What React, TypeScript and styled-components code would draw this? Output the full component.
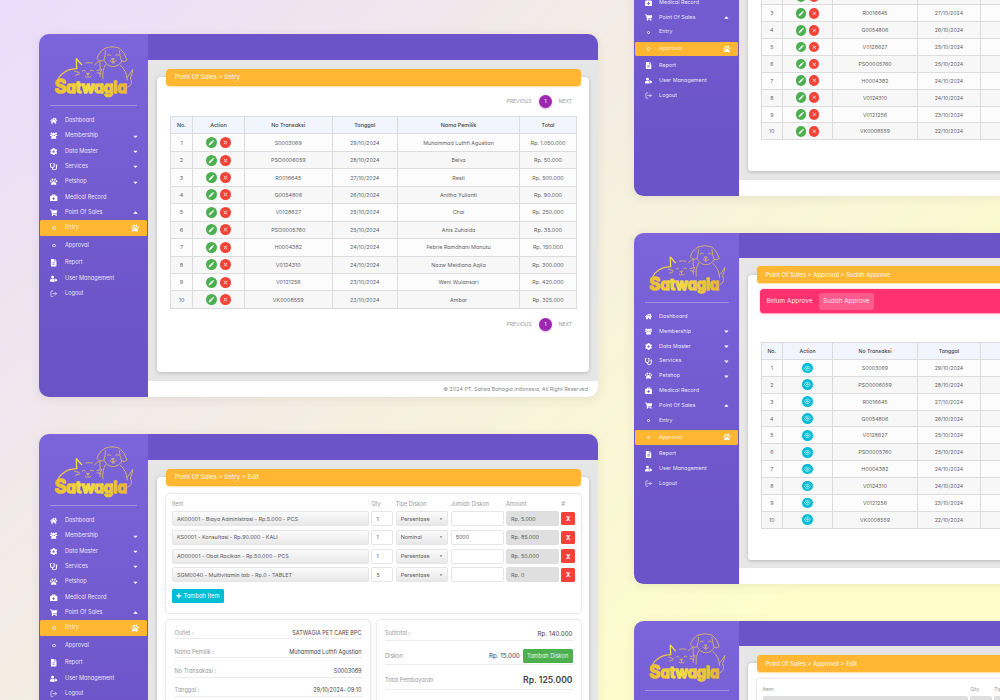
import React from 'react';
import styled, { createGlobalStyle, css } from 'styled-components';
import {
  FaHome, FaCog, FaStethoscope, FaPaw, FaBriefcaseMedical, FaShoppingCart,
  FaFileAlt, FaUserTag, FaPlus, FaCaretDown, FaCaretUp,
} from 'react-icons/fa';
import { MdEdit, MdClose } from 'react-icons/md';
import { FiLogOut, FiEye } from 'react-icons/fi';

const GlobalStyle = createGlobalStyle`
  *, *::before, *::after { box-sizing: border-box; }
  html, body { margin: 0; padding: 0; overflow: hidden; }
  body {
    font-family: Inter, "Liberation Sans", sans-serif;
    font-feature-settings: "cv11";
    color: #666;
  }
`;

const Board = styled.main`
  width: 1000px;
  height: 700px;
  overflow: hidden;
  display: grid;
  grid-template-columns: 559px 540px;
  column-gap: 36px;
  padding-left: 39px;
  background: linear-gradient(135deg, #ebdcfc 0%, #fffeca 82%);
`;

const Column = styled.div<{ $top: number; $gap: number }>`
  display: flex;
  flex-direction: column;
  align-items: flex-start;
  gap: ${(p) => p.$gap}px;
  margin-top: ${(p) => p.$top}px;
`;

const Window = styled.section<{ $zoom?: number }>`
  flex: none;
  display: flex;
  width: 559px;
  height: 363px;
  zoom: ${(p) => p.$zoom ?? 1};
  border-radius: 10px;
  overflow: hidden;
  background: #e6e6e6;
  box-shadow: 0 2px 10px rgba(90, 80, 60, 0.1);
`;

const Sidebar = styled.aside`
  flex: none;
  width: 109px;
  padding: 6px 1px 0;
  background: linear-gradient(180deg, #7c64db 0%, #6b54c7 85%);
  color: #fff;
`;

const LogoSvg = styled.svg`
  display: block;
  width: 100px;
  height: 65px;
  margin-left: 5px;
`;

const Divider = styled.hr`
  margin: 0 10px 7px;
  border: 0;
  height: 1px;
  background: rgba(255, 255, 255, 0.3);
`;

const NavItem = styled.div<{ $active?: boolean; $sub?: boolean }>`
  display: flex;
  align-items: center;
  height: 15.35px;
  margin-bottom: ${(p) => (p.$sub ? 2.1 : 0)}px;
  padding: 0 8px 0 9px;
  border-radius: 1.5px;
  font-size: 5.6px;
  line-height: 1;
  color: ${(p) => (p.$active ? '#fff0cf' : 'rgba(255,255,255,.88)')};
  background: ${(p) => (p.$active ? '#ffb733' : 'transparent')};
`;

const NavIcon = styled.span`
  display: flex;
  justify-content: center;
  width: 10px;
  margin-right: 6px;
  font-size: 7.4px;
  color: #fff;
`;

const NavLabel = styled.span`
  flex: 1;
  white-space: nowrap;
`;

const NavTail = styled.span<{ $size: number }>`
  display: flex;
  justify-content: center;
  width: 8px;
  font-size: ${(p) => p.$size}px;
  color: #fff;
`;

const Bullet = styled.i`
  width: 3.4px;
  height: 3.4px;
  border: 0.8px solid rgba(255, 255, 255, 0.8);
  border-radius: 50%;
`;

const Main = styled.div`
  flex: 1;
  display: flex;
  flex-direction: column;
  min-width: 0;
`;

const TopBar = styled.header`
  flex: none;
  height: 26px;
  background: #6b54c7;
`;

const Content = styled.div`
  flex: 1;
  display: flex;
  min-height: 0;
  padding: 17px 9px 9px;
`;

const Footer = styled.footer`
  flex: none;
  display: flex;
  align-items: center;
  justify-content: flex-end;
  height: 16px;
  padding-right: 10px;
  background: #fff;
  color: #8a8a8a;
  font-size: 5.35px;
`;

const Card = styled.div`
  flex: 1;
  display: flex;
  flex-direction: column;
  min-width: 0;
  height: 295px;
  padding: 0 8px 0 9px;
  border-radius: 4px;
  background: #fff;
  box-shadow: 0 1px 4px rgba(0, 0, 0, 0.2);
`;

const TitleBar = styled.h1`
  flex: none;
  display: flex;
  align-items: center;
  height: 17.5px;
  margin: -8.5px 0 0;
  padding: 0 9px;
  border-radius: 4px;
  background: #ffb733;
  box-shadow: 0 1px 1.5px rgba(255, 183, 51, 0.5);
  color: #fffbe9;
  font-size: 6.25px;
  font-weight: 400;
  white-space: pre;
`;

const Pager = styled.nav`
  flex: none;
  display: flex;
  align-items: center;
  justify-content: flex-end;
  height: 13px;
  padding-right: 9px;
  font-size: 5px;
  color: #999;
`;

const PageDot = styled.span`
  display: grid;
  place-items: center;
  width: 13px;
  height: 13px;
  margin: 0 6.8px 0 7.5px;
  border-radius: 50%;
  background: #9c27b0;
  box-shadow: 0 1px 2px rgba(156, 39, 176, 0.4);
  color: #fff;
`;

const Tabs = styled.div`
  flex: none;
  display: flex;
  align-items: center;
  height: 24px;
  margin: 6.5px 0 0 3px;
  padding-left: 2.5px;
  border-radius: 4px;
  background: #ff3171;
  box-shadow: 0 1px 2px rgba(255, 49, 113, 0.5);
`;

const Tab = styled.span<{ $active?: boolean }>`
  display: flex;
  align-items: center;
  height: 17.5px;
  padding: 0 4.5px;
  margin-right: 2px;
  border-radius: 2.5px;
  background: ${(p) => (p.$active ? 'rgba(255,255,255,.2)' : 'transparent')};
  color: #ffe6ee;
  font-size: 6.6px;
  white-space: nowrap;
`;

const Table = styled.div<{ $top: number }>`
  flex: none;
  display: grid;
  grid-template-rows: repeat(11, 17.45px);
  width: 407px;
  margin: ${(p) => p.$top}px 0 0 4px;
  border-left: 1px solid #dcdcdc;
  border-top: 1px solid #dcdcdc;
`;

const Row = styled.div<{ $tone: 'head' | 'odd' | 'even' }>`
  display: grid;
  grid-template-columns: 22px 52px 87.5px 65.5px 122px 1fr;
  background: ${(p) => ({ head: '#f3f5fe', odd: '#fcfcfc', even: '#f7f7f7' }[p.$tone])};
  ${(p) =>
    p.$tone === 'head' &&
    css`
      color: #444;
      font-weight: 500;
    `}
`;

const Cell = styled.div`
  display: flex;
  align-items: center;
  justify-content: center;
  gap: 2.6px;
  border-right: 1px solid #dcdcdc;
  border-bottom: 1px solid #dcdcdc;
  font-size: 5.4px;
  white-space: nowrap;
`;

const RoundButton = styled.span<{ $color: string }>`
  display: grid;
  place-items: center;
  width: 11px;
  height: 11px;
  border-radius: 50%;
  background: ${(p) => p.$color};
  color: #fff;
  font-size: 7px;
`;

const Panel = styled.div`
  border-radius: 4px;
  background: #fff;
  box-shadow: 0 0 3px rgba(0, 0, 0, 0.22);
`;

const ItemsPanel = styled(Panel)`
  flex: none;
  height: 119.5px;
  margin-top: 7.5px;
  padding: 6.5px 6px 0;
`;

const FieldRow = styled.div<{ $locked?: boolean }>`
  display: grid;
  grid-template-columns: ${(p) =>
    p.$locked ? '212.5px 22px 52.5px 53px 53px' : '197px 22px 52.5px 53px 53px 13.5px'};
  column-gap: 2.4px;
  align-items: center;
  margin-bottom: 3.8px;
`;

const FieldHead = styled(FieldRow)`
  height: 8.5px;
  margin-bottom: 2.5px;
  color: #999;
  font-size: 5.5px;
  white-space: nowrap;
`;

const Field = styled.div<{ $kind: 'select' | 'input' | 'off' }>`
  display: flex;
  align-items: center;
  justify-content: space-between;
  height: 15px;
  padding: 0 4px;
  border: 1px solid ${(p) => (p.$kind === 'off' ? '#dedede' : '#e6e6e6')};
  border-radius: 2px;
  background: ${(p) =>
    ({ select: 'linear-gradient(#fbfbfb, #e8e8e8)', input: '#fff', off: '#dfdfdf' }[p.$kind])};
  color: #5c5c5c;
  font-size: 5.4px;
  white-space: pre;
`;

const SmallCaret = styled.span`
  display: flex;
  font-size: 4px;
`;

const Remove = styled.span`
  display: grid;
  place-items: center;
  height: 13.5px;
  border-radius: 1.5px;
  background: #f44336;
  color: #fff;
  font-size: 6px;
  font-weight: 700;
`;

const AddItem = styled.span`
  display: inline-flex;
  align-items: center;
  gap: 1.5px;
  height: 13.5px;
  margin-top: 3px;
  padding: 0 4.2px;
  border-radius: 1.5px;
  background: #00bcd4;
  color: #fff;
  font-size: 5.8px;
  line-height: 1;
  white-space: nowrap;
  vertical-align: top;
`;

const Summary = styled.div`
  flex: 1;
  display: grid;
  grid-template-columns: 204px 1fr;
  column-gap: 6.5px;
  margin-top: 6.5px;
`;

const SummaryPanel = styled(Panel)<{ $pad: number }>`
  padding: ${(p) => p.$pad}px 8.5px 0;
`;

const Line = styled.div<{ $height: number; $drop: number; $size?: number }>`
  display: flex;
  align-items: center;
  gap: 3px;
  height: ${(p) => p.$height}px;
  padding-top: ${(p) => p.$drop}px;
  border-bottom: 1px solid #ececec;
  font-size: ${(p) => p.$size ?? 5.5}px;
  color: #444;
  white-space: nowrap;
`;

const LineLabel = styled.span`
  flex: 1;
  font-size: 5.6px;
  color: #999;
`;

const Total = styled.strong`
  font-size: 8.6px;
  font-weight: 600;
`;

const DiscountButton = styled.span`
  display: flex;
  align-items: center;
  height: 13.5px;
  padding: 0 4.3px;
  border-radius: 1.5px;
  background: #4caf50;
  color: #e8f7e8;
  font-size: 5.6px;
`;

function Logo() {
  return (
    <LogoSvg viewBox="0 0 300 195">
      <defs>
        <linearGradient id="gold" x1="0" x2="1" y1="0" y2="0">
          <stop offset="0" stopColor="#ecbc34" />
          <stop offset="0.45" stopColor="#f2dc46" />
          <stop offset="1" stopColor="#e8b430" />
        </linearGradient>
      </defs>
      <g fill="none" stroke="#d6b468" strokeWidth="2.8" strokeLinecap="round" strokeLinejoin="round">
        <path d="M38 120 C46 102 64 88 92 86" stroke="#e8c649" strokeWidth="4" />
        <path d="M95 86 L94 56 L110 74" stroke="#f4dc48" strokeWidth="4" />
        <path d="M122 69 Q132 66 142 69" />
        <path d="M149 74 Q156 67 165 62 Q164 76 166 88" />
        <path d="M88 93 L103 98 M91 106 L103 102 M156 92 L168 89 M156 98 L168 101" />
        <path d="M112 93 Q117 88 121 93 M136 92 Q141 87 145 92" />
        <path d="M125 100 H133 L129 104 Z M129 104 V109 M121 109 Q125 115 129 110 Q134 115 138 109" />
        <path d="M180 25 Q201 16 224 25 Q240 38 246 60 Q240 68 230 63 Q224 48 223 32" />
        <path d="M180 25 Q162 35 156 55 Q166 68 177 60 Q182 45 181 32" />
        <path d="M178 62 Q186 79 204 80 Q222 79 230 64" />
        <path d="M187 46 Q192 40 197 46 M212 46 Q217 40 221 46" />
        <path d="M200 56 H208 L204 60 Z M204 60 V64 M196 62 Q200 69 204 65 Q209 69 213 62 M201 67 Q204 75 208 67" />
        <path d="M182 74 Q170 92 174 116 M226 76 Q246 92 247 120 M246 112 Q256 104 263 88 Q263 100 256 114 Q266 134 248 142" />
        <path d="M170 88 Q162 98 165 110" />
      </g>
      <text
        x="29"
        y="158"
        textLength="217"
        lengthAdjust="spacingAndGlyphs"
        fontFamily="Inter, sans-serif"
        fontWeight="700"
        fontSize="47"
        fill="url(#gold)"
        stroke="url(#gold)"
        strokeWidth="4"
        strokeLinejoin="round"
      >
        <tspan fontSize="55">S</tspan>atwagia
      </text>
    </LogoSvg>
  );
}

function MembersIcon() {
  return (
    <svg width="1em" height="1em" viewBox="0 0 24 24" fill="currentColor">
      <circle cx="4.5" cy="5" r="3.3" />
      <circle cx="19.5" cy="5" r="3.3" />
      <circle cx="12" cy="7.5" r="4.8" />
      <path d="M0 14V11Q0 8.800 2 8.800H6.500Q7.300 12 9 13H0ZM24 14V11Q24 8.800 22 8.800H17.500Q16.700 12 15 13H24Z" />
      <path d="M4 22V17.500Q4 13 8 13H16Q20 13 20 17.500V22Z" />
    </svg>
  );
}

const MENU: { label: string; icon: React.ReactNode; caret?: 'up' | 'down'; sub?: boolean }[] = [
  { label: 'Dashboard', icon: <FaHome /> },
  { label: 'Membership', icon: <MembersIcon />, caret: 'down' },
  { label: 'Data Master', icon: <FaCog />, caret: 'down' },
  { label: 'Services', icon: <FaStethoscope />, caret: 'down' },
  { label: 'Petshop', icon: <FaPaw />, caret: 'down' },
  { label: 'Medical Record', icon: <FaBriefcaseMedical /> },
  { label: 'Point Of Sales', icon: <FaShoppingCart />, caret: 'up' },
  { label: 'Entry', icon: <Bullet />, sub: true },
  { label: 'Approval', icon: <Bullet />, sub: true },
  { label: 'Report', icon: <FaFileAlt /> },
  { label: 'User Management', icon: <FaUserTag /> },
  { label: 'Logout', icon: <FiLogOut /> },
];

function Shell({ active, zoom, children }: { active: string; zoom?: number; children: React.ReactNode }) {
  return (
    <Window $zoom={zoom}>
      <Sidebar>
        <Logo />
        <Divider />
        {MENU.map((m) => {
          const on = m.label === active;
          return (
            <NavItem key={m.label} $active={on} $sub={m.sub}>
              <NavIcon>{m.icon}</NavIcon>
              <NavLabel>{m.label}</NavLabel>
              {m.caret && <NavTail $size={7}>{m.caret === 'up' ? <FaCaretUp /> : <FaCaretDown />}</NavTail>}
              {on && <NavTail $size={8}><FaPaw /></NavTail>}
            </NavItem>
          );
        })}
      </Sidebar>
      <Main>
        <TopBar />
        <Content>
          <Card>{children}</Card>
        </Content>
        <Footer>© 2024 PT. Satwa Bahagia Indonesia, All Right Reserved</Footer>
      </Main>
    </Window>
  );
}

const Space = styled.div<{ $h: number }>`
  flex: none;
  height: ${(p) => p.$h}px;
`;

function Pagination() {
  return (
    <Pager>
      PREVIOUS<PageDot>1</PageDot>NEXT
    </Pager>
  );
}

const RECORDS = [
  ['S0003069', '29/10/2024', 'Muhammad Luthfi Agustian', 'Rp. 1.050.000'],
  ['PSO0006059', '28/10/2024', 'Belva', 'Rp. 50.000'],
  ['R0016645', '27/10/2024', 'Resti', 'Rp. 500.000'],
  ['G0054806', '26/10/2024', 'Anitha Yulianti', 'Rp. 90.000'],
  ['V0128627', '25/10/2024', 'Chai', 'Rp. 250.000'],
  ['PSO0005760', '25/10/2024', 'Anis Zuhaida', 'Rp. 35.000'],
  ['H0004382', '24/10/2024', 'Febrie Ramdhani Manutu', 'Rp. 150.000'],
  ['V0124310', '24/10/2024', 'Nazw Meidiana Aqila', 'Rp. 300.000'],
  ['V0121256', '23/10/2024', 'Weni Wulansari', 'Rp. 420.000'],
  ['VK0008559', '22/10/2024', 'Ambar', 'Rp. 325.000'],
];

function Transactions({ top, view }: { top: number; view?: boolean }) {
  return (
    <Table $top={top}>
      <Row $tone="head">
        {['No.', 'Action', 'No Transaksi', 'Tanggal', 'Nama Pemilik', 'Total'].map((h) => (
          <Cell key={h}>{h}</Cell>
        ))}
      </Row>
      {RECORDS.map((r, i) => (
        <Row key={r[0]} $tone={i % 2 ? 'even' : 'odd'}>
          <Cell>{i + 1}</Cell>
          <Cell>
            {view ? (
              <RoundButton $color="#00bcd4"><FiEye /></RoundButton>
            ) : (
              <>
                <RoundButton $color="#4caf50"><MdEdit /></RoundButton>
                <RoundButton $color="#f44336"><MdClose /></RoundButton>
              </>
            )}
          </Cell>
          {r.map((v) => (
            <Cell key={v}>{v}</Cell>
          ))}
        </Row>
      ))}
    </Table>
  );
}

function EntryList() {
  return (
    <Shell active="Entry">
      <TitleBar>{'Point Of Sales > Entry'}</TitleBar>
      <Space $h={8.5} />
      <Pagination />
      <Transactions top={8.5} />
      <Space $h={9} />
      <Pagination />
    </Shell>
  );
}

function ApprovalList({ done }: { done?: boolean }) {
  return (
    <Shell active="Approval" zoom={0.967}>
      <TitleBar>{`Point Of Sales > Approval > ${done ? 'Sudah' : 'Belum'} Approve`}</TitleBar>
      <Tabs>
        <Tab $active={!done}>Belum Approve</Tab>
        <Tab $active={done}>Sudah Approve</Tab>
      </Tabs>
      <Space $h={8.5} />
      <Pagination />
      <Transactions top={9} view={done} />
    </Shell>
  );
}

const ITEMS = [
  ['AK00001 - Biaya Administrasi - Rp.5.000 - PCS', '1', 'Persentase', '', 'Rp. 5.000'],
  ['KS0001 - Konsultasi - Rp.90.000 - KALI', '1', 'Nominal', '5000', 'Rp. 85.000'],
  ['AO00001 - Obat Racikan - Rp.50.000 - PCS', '1', 'Persentase', '', 'Rp. 50.000'],
  ['SGM0040 - Multivitamin tab - Rp.0 - TABLET', '5', 'Persentase', '', 'Rp. 0'],
];

function EditForm({ section, zoom, locked }: { section: string; zoom?: number; locked?: boolean }) {
  const heads = ['Item', 'Qty', 'Tipe Diskon', 'Jumlah Diskon', 'Amount'];
  return (
    <Shell active={section} zoom={zoom}>
      <TitleBar>{`Point Of Sales > ${section} > Edit`}</TitleBar>
      <ItemsPanel>
        <FieldHead $locked={locked}>
          {(locked ? heads : [...heads, '#']).map((h) => (
            <span key={h}>{h}</span>
          ))}
        </FieldHead>
        {ITEMS.map(([item, qty, type, discount, amount]) => (
          <FieldRow key={item} $locked={locked}>
            <Field $kind={locked ? 'off' : 'select'}>{item}</Field>
            <Field $kind={locked ? 'off' : 'input'}>{qty}</Field>
            <Field $kind={locked ? 'off' : 'select'}>
              {type}
              <SmallCaret><FaCaretDown /></SmallCaret>
            </Field>
            <Field $kind={locked ? 'off' : 'input'}>{discount}</Field>
            <Field $kind="off">{amount}</Field>
            {!locked && <Remove>X</Remove>}
          </FieldRow>
        ))}
        {!locked && <AddItem><FaPlus /> Tambah Item</AddItem>}
      </ItemsPanel>
      <Summary>
        <SummaryPanel $pad={0.5}>
          <Line $height={19.2} $drop={7.5}><LineLabel>Outlet :</LineLabel>SATWAGIA PET CARE BPC</Line>
          <Line $height={19.2} $drop={7.5}><LineLabel>Nama Pemilik :</LineLabel>Muhammad Luthfi Agustian</Line>
          <Line $height={19.2} $drop={7.5}><LineLabel>No Transakasi :</LineLabel>S0003069</Line>
          <Line $height={19.2} $drop={7.5}><LineLabel>Tanggal :</LineLabel>29/10/2024- 09:10</Line>
        </SummaryPanel>
        <SummaryPanel $pad={4}>
          <Line $height={17} $drop={3} $size={6.2}><LineLabel>Subtotal :</LineLabel>Rp. 140.000</Line>
          <Line $height={24.5} $drop={7} $size={6.2}>
            <LineLabel>Diskon</LineLabel>Rp. 15.000
            <DiscountButton>Tambah Diskon</DiscountButton>
          </Line>
          <Line $height={24.5} $drop={7}><LineLabel>Total Pembayaran</LineLabel><Total>Rp. 125.000</Total></Line>
        </SummaryPanel>
      </Summary>
    </Shell>
  );
}

export default function App() {
  return (
    <>
      <GlobalStyle />
      <Board>
        <Column $top={34} $gap={37}>
          <EntryList />
          <EditForm section="Entry" />
        </Column>
        <Column $top={-155.4} $gap={37.3}>
          <ApprovalList />
          <ApprovalList done />
          <EditForm section="Approval" zoom={0.967} locked />
        </Column>
      </Board>
    </>
  );
}
